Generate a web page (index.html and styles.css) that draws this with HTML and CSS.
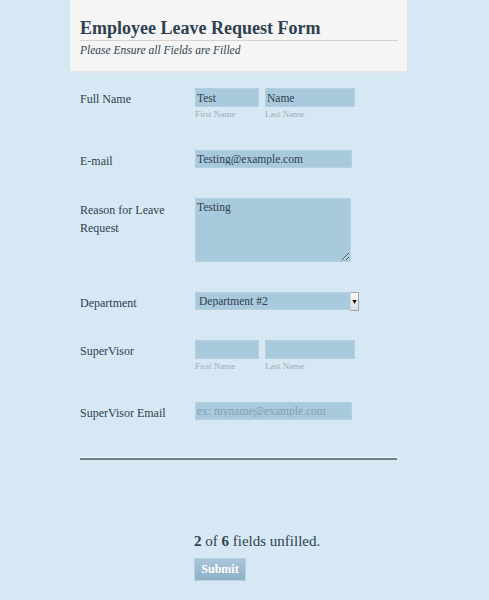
FILE: index.html
```html
<!DOCTYPE html>
<html lang="en">
<head>
    <meta charset="UTF-8">
    <meta name="viewport" content="width=device-width, initial-scale=1.0">
    <title>Employee Leave Request Form</title>
    <link rel="stylesheet" href="styles.css">
</head>
<body>
    <form class="form-wrap">
        <div class="form-header">
            <h1 class="form-title">Employee Leave Request Form</h1>
            <div class="form-subtitle">Please Ensure all Fields are Filled</div>
        </div>

        <div class="form-body">
            <div class="form-row">
                <label class="form-label">Full Name</label>
                <div class="form-fields">
                    <div class="name-part">
                        <input class="input input-first" type="text" value="Test">
                        <span class="sublabel">First Name</span>
                    </div>
                    <div class="name-part">
                        <input class="input input-last" type="text" value="Name">
                        <span class="sublabel">Last Name</span>
                    </div>
                </div>
            </div>

            <div class="form-row">
                <label class="form-label">E-mail</label>
                <div class="form-fields">
                    <input class="input input-email" type="text" value="Testing@example.com">
                </div>
            </div>

            <div class="form-row">
                <label class="form-label label-area">Reason for Leave Request</label>
                <div class="form-fields">
                    <textarea class="input input-area">Testing</textarea>
                </div>
            </div>

            <div class="form-row">
                <label class="form-label">Department</label>
                <div class="form-fields">
                    <div class="select-wrap">
                        <select class="input input-select">
                            <option>Department #2</option>
                        </select>
                        <span class="select-btn">&#9660;</span>
                    </div>
                </div>
            </div>

            <div class="form-row">
                <label class="form-label">SuperVisor</label>
                <div class="form-fields">
                    <div class="name-part">
                        <input class="input input-first" type="text">
                        <span class="sublabel">First Name</span>
                    </div>
                    <div class="name-part">
                        <input class="input input-last" type="text">
                        <span class="sublabel">Last Name</span>
                    </div>
                </div>
            </div>

            <div class="form-row">
                <label class="form-label">SuperVisor Email</label>
                <div class="form-fields">
                    <input class="input input-email" type="text" placeholder="ex: myname@example.com">
                </div>
            </div>

            <div class="divider"></div>

            <div class="form-footer">
                <p class="unfilled"><b>2</b> of <b>6</b> fields unfilled.</p>
                <button class="submit-btn" type="button">Submit</button>
            </div>
        </div>
    </form>
</body>
</html>
```

FILE: styles.css
```css
* {
    margin: 0;
    padding: 0;
    box-sizing: border-box;
}

body {
    font-family: 'Liberation Serif', 'DejaVu Serif', serif;
    background: #d6e8f3;
    color: #2f4050;
    font-size: 12px;
}

.form-wrap {
    width: 337px;
    margin-left: 70px;
}

.form-header {
    background: #f5f5f5;
    border-bottom: 2px solid #e2e6e8;
    padding: 17px 9px 0 10px;
    height: 73px;
}

.form-title {
    font-size: 18px;
    font-weight: bold;
    color: #2f4050;
    line-height: 23px;
    border-bottom: 1px solid #d3d3d3;
    white-space: nowrap;
}

.form-subtitle {
    font-style: italic;
    font-size: 11.5px;
    line-height: 14px;
    margin-top: 2px;
    color: #2f4050;
}

.form-body {
    padding: 15px 0 0 10px;
}

.form-row {
    display: flex;
    align-items: flex-start;
    margin-bottom: 30px;
}

.form-label {
    width: 115px;
    flex-shrink: 0;
    padding: 5px 10px 0 0;
    line-height: 13px;
    font-size: 12px;
}

.label-area {
    padding-top: 3px;
    line-height: 18px;
}

.form-fields {
    display: flex;
    gap: 6px;
}

.name-part {
    display: flex;
    flex-direction: column;
}

.input {
    font-family: inherit;
    font-size: 11.5px;
    color: #2f4050;
    background: #a9c9dc;
    border: 1px solid #b3d0e0;
    height: 18px;
    padding: 0 1px;
    outline: none;
}

.input::placeholder {
    color: #86a0b1;
}

.input-first {
    width: 64px;
    height: 19px;
}

.input-last {
    width: 90px;
    height: 19px;
}

.input-email {
    width: 157px;
}

.input-area {
    width: 156px;
    height: 64px;
    resize: both;
    line-height: 15px;
    padding-top: 1px;
}

.sublabel {
    font-size: 9px;
    color: #a1acb3;
    line-height: 12px;
    margin-top: 1px;
}

.select-wrap {
    display: flex;
    align-items: flex-start;
    height: 18px;
}

.input-select {
    appearance: none;
    width: 155px;
    padding-left: 3px;
    border-right: none;
}

.select-btn {
    width: 9px;
    height: 19px;
    background: linear-gradient(#fdfdfd, #dcdcdc);
    border: 1px solid #9aa4aa;
    border-left-color: #cfd6da;
    font-size: 7px;
    color: #000;
    display: flex;
    align-items: center;
    justify-content: center;
}

.divider {
    width: 317px;
    height: 2px;
    background: #6f8188;
    box-shadow: 0 -1px 0 #eef6fa;
    margin-top: 38px;
}

.form-footer {
    padding: 71px 0 0 114px;
}

.unfilled {
    font-size: 15px;
    line-height: 20px;
    color: #2f4050;
}

.submit-btn {
    display: block;
    margin-top: 7px;
    width: 52px;
    height: 23px;
    font-family: inherit;
    font-weight: bold;
    font-size: 12px;
    color: #fff;
    background: linear-gradient(#a9c6d9, #8db0c7);
    border: 1px solid #b8d0df;
    cursor: pointer;
}
```
